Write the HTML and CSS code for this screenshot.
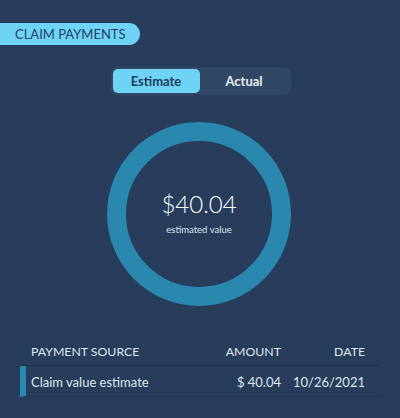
FILE: index.html
```html
<!DOCTYPE html>
<html>
<head>
<meta charset="utf-8">
<link rel="stylesheet" href="styles.css">
</head>
<body>
<div class="page">
  <div class="title">CLAIM PAYMENTS</div>
  <div class="toggle">
    <div class="tab active">Estimate</div>
    <div class="tab">Actual</div>
  </div>
  <div class="donut-wrap">
    <div class="donut">
      <div class="value">$40.04</div>
      <div class="caption">estimated value</div>
    </div>
  </div>
  <div class="table">
    <div class="row head">
      <div class="c-source">PAYMENT SOURCE</div>
      <div class="c-amount">AMOUNT</div>
      <div class="c-date">DATE</div>
    </div>
    <div class="row item">
      <div class="c-source">Claim value estimate</div>
      <div class="c-amount">$ 40.04</div>
      <div class="c-date">10/26/2021</div>
    </div>
  </div>
</div>
</body>
</html>
```
FILE: styles.css
```css
html, body {
  margin: 0;
  padding: 0;
  background: #283d5b;
}
body {
  width: 400px;
  height: 418px;
  overflow: hidden;
  font-family: "Lato", "Noto Sans", sans-serif;
  color: #e6edf4;
}
.page {
  padding-top: 23px;
  display: flex;
  flex-direction: column;
}
.title {
  align-self: flex-start;
  height: 22px;
  line-height: 22px;
  padding: 0 14px 0 15px;
  background: #6fd3f5;
  color: #1f4163;
  font-size: 13px;
  border-radius: 0 11px 11px 0;
}
.toggle {
  align-self: center;
  margin-top: 22px;
  margin-left: 1px;
  width: 180px;
  height: 28px;
  padding: 2px;
  box-sizing: border-box;
  background: #314865;
  border-radius: 6px;
  display: flex;
}
.tab {
  flex: 1;
  display: flex;
  align-items: center;
  justify-content: center;
  font-size: 13px;
  font-weight: 700;
  color: #e8eef5;
  border-radius: 5px;
}
.tab.active {
  flex: 0 0 87px;
  background: #6fd3f5;
  color: #1d3d5c;
}
.donut-wrap {
  display: flex;
  justify-content: center;
  margin-top: 27px;
}
.donut {
  width: 184px;
  height: 184px;
  box-sizing: border-box;
  border: 19px solid #2a87ad;
  border-radius: 50%;
  display: flex;
  flex-direction: column;
  align-items: center;
  justify-content: center;
  margin-left: -2px;
}
.value {
  font-size: 24px;
  font-weight: 300;
  color: #ffffff;
  line-height: 28px;
  margin-top: -4px;
}
.caption {
  font-size: 9.5px;
  color: #dbe4ee;
  margin-top: 6px;
}
.table {
  margin: 30px 20px 0 20px;
  display: flex;
  flex-direction: column;
}
.row {
  display: flex;
  align-items: center;
  font-size: 13px;
  color: #dfe7f0;
  border-bottom: 1px solid #22354f;
}
.row.head {
  height: 30px;
  box-sizing: border-box;
  align-items: flex-start;
  padding: 8px 0 0 11px;
  font-size: 12.3px;
}
.row.item {
  height: 31px;
  border-left: 6px solid #2a87ad;
  padding-left: 5px;
  padding-top: 1px;
  box-sizing: border-box;
}
.c-source {
  flex: 1;
}
.c-amount {
  width: 80px;
  text-align: right;
}
.c-date {
  width: 84px;
  text-align: right;
  padding-right: 15px;
}
```
